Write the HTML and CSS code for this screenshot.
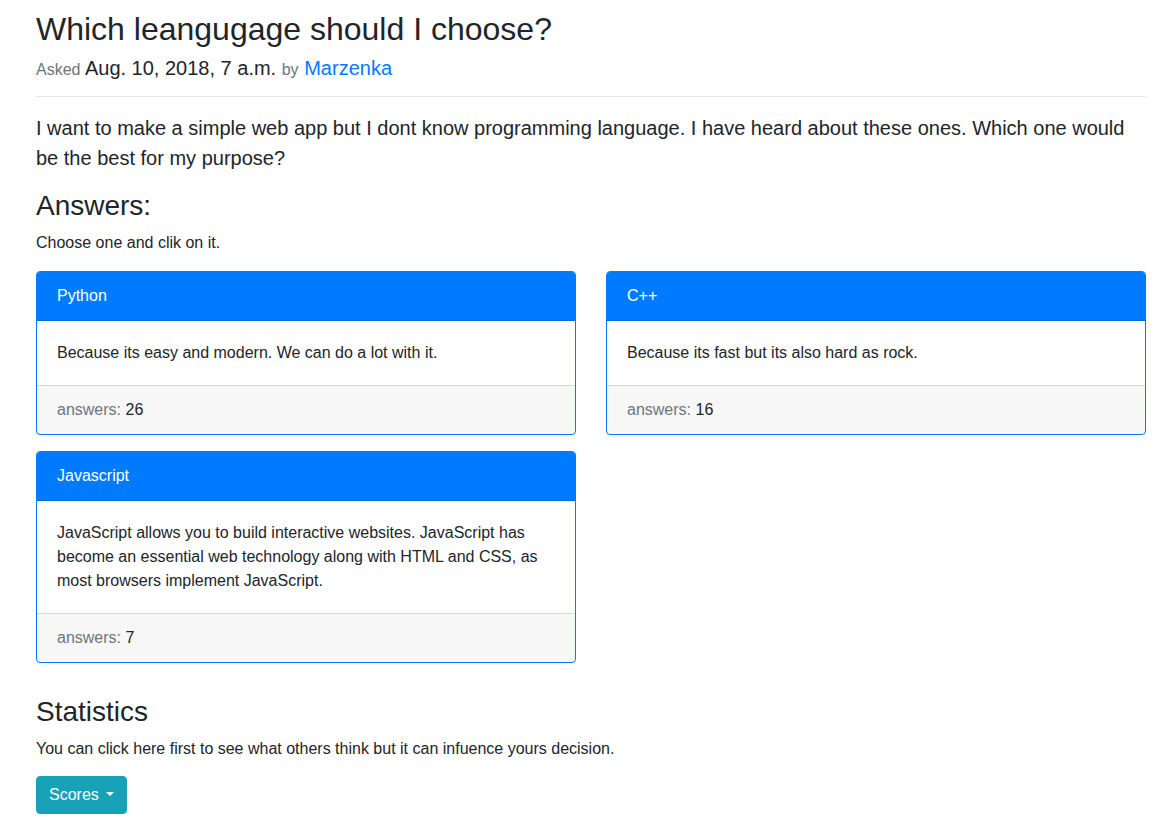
FILE: index.html
```html
<!DOCTYPE html>
<html lang="en">
<head>
<meta charset="utf-8">
<title>Which leangugage should I choose?</title>
<link rel="stylesheet" href="styles.css">
</head>
<body>
<div class="page">
  <h2 class="title">Which leangugage should I choose?</h2>
  <h5 class="meta"><small class="muted">Asked</small> Aug. 10, 2018, 7 a.m. <small class="muted">by</small> <a href="#" class="link">Marzenka</a></h5>
  <hr class="rule">
  <p class="lead">I want to make a simple web app but I dont know programming language. I have heard about these ones. Which one would be the best for my purpose?</p>
  <h3 class="section-title">Answers:</h3>
  <p class="text">Choose one and clik on it.</p>
  <div class="cards">
    <div class="card">
      <div class="card-header">Python</div>
      <div class="card-body">Because its easy and modern. We can do a lot with it.</div>
      <div class="card-footer"><span class="muted">answers:</span> 26</div>
    </div>
    <div class="card">
      <div class="card-header">C++</div>
      <div class="card-body">Because its fast but its also hard as rock.</div>
      <div class="card-footer"><span class="muted">answers:</span> 16</div>
    </div>
    <div class="card">
      <div class="card-header">Javascript</div>
      <div class="card-body">JavaScript allows you to build interactive websites. JavaScript has become an essential web technology along with HTML and CSS, as most browsers implement JavaScript.</div>
      <div class="card-footer"><span class="muted">answers:</span> 7</div>
    </div>
  </div>
  <div class="stats">
    <h3 class="section-title">Statistics</h3>
    <p class="text stats-text">You can click here first to see what others think but it can infuence yours decision.</p>
    <div class="actions">
      <button class="btn" type="button">Scores <span class="caret"></span></button>
    </div>
  </div>
</div>
</body>
</html>
```
FILE: styles.css
```css
* { box-sizing: border-box; }
body {
  margin: 0;
  font-family: "Liberation Sans", Arial, sans-serif;
  font-size: 16px;
  line-height: 1.5;
  color: #212529;
  background: #fff;
}
.page {
  width: 1110px;
  margin-left: 36px;
  padding-top: 10px;
}
.title {
  margin: 0 0 8px;
  font-size: 32px;
  font-weight: 500;
  line-height: 1.2;
}
.meta {
  margin: 0;
  font-size: 20px;
  font-weight: 500;
  line-height: 1.2;
}
.meta small { font-size: 80%; font-weight: 400; }
.muted { color: #6c757d; }
.link { color: #007bff; text-decoration: none; }
.rule {
  margin: 16px 0;
  border: 0;
  border-top: 1px solid rgba(0,0,0,.1);
  height: 0;
}
.lead {
  margin: 0 0 16px;
  font-size: 20px;
  font-weight: 300;
  line-height: 1.5;
}
.section-title {
  margin: 0 0 8px;
  font-size: 28px;
  font-weight: 500;
  line-height: 1.2;
}
.text { margin: 0 0 16px; }
.stats-text { margin-bottom: 15px; }
.cards {
  display: grid;
  grid-template-columns: 540px 540px;
  column-gap: 30px;
  row-gap: 16px;
  align-items: start;
}
.card {
  border: 1px solid #007bff;
  border-radius: 4px;
  overflow: hidden;
  background: #fff;
}
.card-header {
  background: #007bff;
  color: #fff;
  padding: 12px 20px;
  border-bottom: 1px solid rgba(0,0,0,.125);
}
.card-body { padding: 20px; }
.card-footer {
  padding: 12px 20px;
  background: rgba(0,0,0,.03);
  border-top: 1px solid rgba(0,0,0,.125);
}
.stats { padding-top: 32px; }
.actions { display: flex; }
.btn {
  font-family: inherit;
  font-size: 16px;
  line-height: 1.5;
  color: #fff;
  background: #17a2b8;
  border: 1px solid #17a2b8;
  border-radius: 4px;
  padding: 6px 12px;
  cursor: pointer;
}
.caret {
  display: inline-block;
  margin-left: 3px;
  vertical-align: 4px;
  border-top: 4px solid #fff;
  border-left: 4px solid transparent;
  border-right: 4px solid transparent;
  border-bottom: 0;
}
```
